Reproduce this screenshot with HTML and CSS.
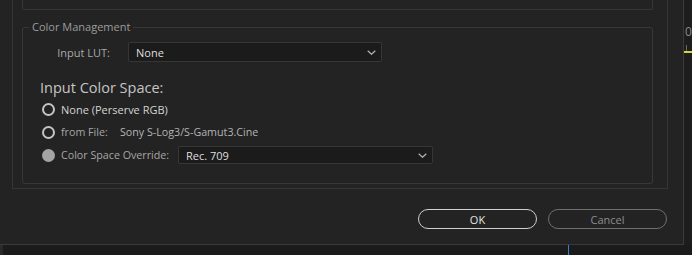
FILE: index.html
```html
<!DOCTYPE html>
<html lang="en">
<head>
  <meta charset="UTF-8">
  <title>Interpret Footage - Color Management</title>
  <link rel="stylesheet" href="styles.css">
</head>
<body>
  <div class="screen">
    <div class="top-row">
      <div class="dialog">
        <div class="outer-box">
          <div class="prev-box"></div>

          <fieldset class="group">
            <legend>Color Management</legend>

            <div class="lut-row">
              <span class="lut-label">Input LUT:</span>
              <div class="dropdown lut-dropdown">
                <span>None</span>
                <svg class="chevron" width="9" height="5" viewBox="0 0 9 5"><path d="M0.7 0.7l3.8 3.6 3.8-3.6" fill="none" stroke="#b0b0b0" stroke-width="1.2"/></svg>
              </div>
            </div>

            <h2 class="space-title">Input Color Space:</h2>

            <div class="radio-list">
              <div class="radio-row">
                <span class="radio"></span>
                <span class="radio-text bright">None (Perserve RGB)</span>
              </div>
              <div class="radio-row">
                <span class="radio"></span>
                <span class="radio-text file-label">from File:</span>
                <span class="file-value">Sony S-Log3/S-Gamut3.Cine</span>
              </div>
              <div class="radio-row override-row">
                <span class="radio filled"></span>
                <span class="radio-text override-label">Color Space Override:</span>
                <div class="dropdown override-dropdown">
                  <span>Rec. 709</span>
                  <svg class="chevron" width="9" height="5" viewBox="0 0 9 5"><path d="M0.7 0.7l3.8 3.6 3.8-3.6" fill="none" stroke="#b0b0b0" stroke-width="1.2"/></svg>
                </div>
              </div>
            </div>
          </fieldset>
        </div>

        <div class="buttons">
          <button class="btn btn-ok">OK</button>
          <button class="btn btn-cancel">Cancel</button>
        </div>
      </div>

      <div class="side-panel">
        <span class="ruler-num">0</span>
        <span class="ruler-tick"></span>
        <span class="ruler-bar"></span>
      </div>
    </div>

    <div class="bottom-strip">
      <span class="edge"></span>
      <span class="playhead"></span>
    </div>
  </div>
</body>
</html>
```

FILE: styles.css
```css
* {
  box-sizing: border-box;
  margin: 0;
  padding: 0;
}

body {
  font-family: 'Open Sans', 'Noto Sans', sans-serif;
  background: #1c1c1c;
  color: #c8c8c8;
  width: 692px;
  height: 255px;
  overflow: hidden;
}

.top-row {
  display: flex;
  height: 245px;
}

.dialog {
  width: 684px;
  height: 245px;
  background: #232323;
  border-right: 1px solid #3a3a3a;
  border-bottom: 1px solid #3a3a3a;
  padding: 0 15px 0 12px;
}

.outer-box {
  border: 1px solid #353535;
  border-top: none;
  height: 189px;
  padding: 0 14px 0 9px;
}

.prev-box {
  height: 10px;
  border: 1px solid #363636;
  border-top: none;
  border-radius: 0 0 2px 2px;
}

.group {
  margin-top: 9px;
  height: 165px;
  border: 1px solid #383838;
  border-radius: 3px;
  padding: 0;
}

.group legend {
  margin-left: 6px;
  padding: 0 3px;
  font-size: 11px;
  line-height: 16px;
  color: #9c9c9c;
}

.lut-row {
  display: flex;
  align-items: center;
  margin-top: 7px;
}

.lut-label {
  width: 87px;
  text-align: right;
  font-size: 11px;
  color: #a9a9a9;
  margin-right: 18px;
}

.dropdown {
  display: flex;
  align-items: center;
  justify-content: space-between;
  background: #1b1b1b;
  border: 1px solid #363636;
  border-radius: 2px;
  padding: 0 5px 0 7px;
  font-size: 11px;
  color: #dedede;
}

.lut-dropdown {
  width: 254px;
  height: 20px;
}

.space-title {
  font-weight: normal;
  font-size: 14.5px;
  line-height: 18px;
  color: #c6c6c6;
  margin: 17px 0 0 17px;
}

.radio-list {
  padding-left: 19px;
  margin-top: 2px;
}

.radio-row {
  display: flex;
  align-items: center;
  height: 20px;
  margin-bottom: 3px;
  font-size: 10.7px;
}

.override-row {
  margin-top: 1px;
}

.radio {
  width: 13px;
  height: 13px;
  border: 2px solid #c4c4c4;
  border-radius: 50%;
  margin-right: 6px;
}

.radio.filled {
  border: none;
  background: #a4a4a4;
}

.radio-text {
  color: #a6a6a6;
}

.radio-text.bright {
  color: #d4d4d4;
  font-weight: 500;
  font-size: 11px;
}

.file-label {
  width: 59px;
}

.file-value {
  color: #b4b4b4;
}

.override-label {
  width: 117px;
}

.override-dropdown {
  width: 255px;
  height: 18px;
}

.buttons {
  display: flex;
  justify-content: flex-end;
  gap: 11px;
  margin-top: 20px;
  padding-right: 1px;
}

.btn {
  width: 119px;
  height: 20px;
  border-radius: 10px;
  background: transparent;
  font-family: 'Open Sans', 'Noto Sans', sans-serif;
  font-size: 11px;
}

.btn-ok {
  border: 1.5px solid #cfcfcf;
  color: #e2e2e2;
}

.btn-cancel {
  border: 1.5px solid #6f6f6f;
  color: #8e8e8e;
}

.side-panel {
  position: relative;
  flex: 1;
  background: #1d1d1d;
}

.ruler-num {
  position: absolute;
  left: 1px;
  top: 23px;
  font-size: 12px;
  color: #8a8a8a;
}

.ruler-tick {
  position: absolute;
  left: 2px;
  top: 45px;
  width: 1px;
  height: 6px;
  background: #6a6a6a;
}

.ruler-bar {
  position: absolute;
  left: 0;
  right: 0;
  top: 51px;
  height: 2px;
  background: #d4d24a;
}

.bottom-strip {
  position: relative;
  height: 10px;
  background: #1b1b1b;
}

.edge {
  position: absolute;
  left: 0;
  top: 0;
  width: 3px;
  height: 10px;
  background: #2a2a2a;
}

.playhead {
  position: absolute;
  left: 568px;
  top: 0;
  width: 1px;
  height: 10px;
  background: #3d7fd6;
}
```
